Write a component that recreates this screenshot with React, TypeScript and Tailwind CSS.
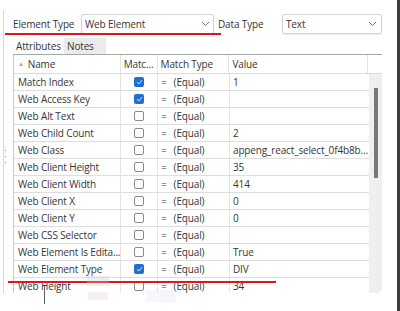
import React from "react";

const rows: { name: string; checked: boolean; value: string }[] = [
  { name: "Match Index", checked: true, value: "1" },
  { name: "Web Access Key", checked: true, value: "" },
  { name: "Web Alt Text", checked: false, value: "" },
  { name: "Web Child Count", checked: false, value: "2" },
  { name: "Web Class", checked: false, value: "appeng_react_select_0f4b8b..." },
  { name: "Web Client Height", checked: false, value: "35" },
  { name: "Web Client Width", checked: false, value: "414" },
  { name: "Web Client X", checked: false, value: "0" },
  { name: "Web Client Y", checked: false, value: "0" },
  { name: "Web CSS Selector", checked: false, value: "" },
  { name: "Web Element Is Edita...", checked: false, value: "True" },
  { name: "Web Element Type", checked: true, value: "DIV" },
  { name: "Web Height", checked: false, value: "34" },
];

function Chevron() {
  return (
    <svg width="9" height="6" viewBox="0 0 9 6" className="shrink-0">
      <path d="M1 1 L4.5 4.5 L8 1" fill="none" stroke="#777" strokeWidth="1" />
    </svg>
  );
}

function Checkbox({ checked }: { checked: boolean }) {
  if (checked) {
    return (
      <div className="w-[10px] h-[10px] rounded-[2px] bg-[#1f6fd1] flex items-center justify-center">
        <svg width="7" height="6" viewBox="0 0 7 6">
          <path d="M1 3.2 L2.8 5 L6 1.2" fill="none" stroke="#dfe9f7" strokeWidth="1" />
        </svg>
      </div>
    );
  }
  return <div className="w-[10px] h-[10px] rounded-[2px] border border-[#8a8a8a] bg-white" />;
}

export default function App() {
  return (
    <div
      className="relative w-[400px] h-[311px] bg-white overflow-hidden border-r-[3px] border-[#3c3c3c] text-[#363636] text-[10px] tracking-[-0.15px]"
      style={{ fontFamily: '"Open Sans", "Noto Sans", sans-serif' }}
    >
      <div className="ml-[3px] mt-[10px] h-[283px] border-l border-[#d6d6d6] pl-[9px] pr-[15px] flex flex-col">
        {/* Top row */}
        <div className="flex items-center h-[20px] mt-[4px]">
          <div className="w-[68px]">Element Type</div>
          <div className="w-[133px] h-[20px] border border-[#d4d4d4] rounded-[2px] flex items-center justify-between pl-[3px] pr-[3px] shadow-[0_1px_1px_rgba(0,0,0,0.08)]">
            <span>Web Element</span>
            <Chevron />
          </div>
          <div className="w-[68px] pl-[4px]">Data Type</div>
          <div className="w-[100px] h-[20px] border border-[#d4d4d4] rounded-[2px] flex items-center justify-between pl-[3px] pr-[4px] shadow-[0_1px_1px_rgba(0,0,0,0.08)]">
            <span>Text</span>
            <Chevron />
          </div>
        </div>
        {/* Tabs */}
        <div className="flex items-end h-[17px] mt-[3px]">
          <div className="h-[16px] w-[51px] pl-[3px] flex items-center bg-white">Attributes</div>
          <div className="h-[16px] w-[42px] pl-[3px] flex items-center bg-[#ebebeb]">Notes</div>
        </div>
        {/* Table */}
        <div className="flex-1 flex flex-col border-t border-l border-[#c8c8c8] border-t-[#a8a8a8] overflow-hidden">
          <div className="flex h-[19px] shrink-0 border-b border-[#dcdcdc]">
            <div className="w-[107px] flex items-center pl-[4px] border-r border-[#e3e3e3]">
              <span className="text-[6px] text-[#aaa] mr-[4px]">▲</span>
              <span>Name</span>
            </div>
            <div className="w-[37px] flex items-center pl-[3px] border-r border-[#e3e3e3]">Matc...</div>
            <div className="w-[72px] flex items-center pl-[3px] border-r border-[#e3e3e3]">Match Type</div>
            <div className="w-[139px] flex items-center pl-[3px] border-r border-[#e3e3e3]">Value</div>
            <div className="w-[14px]" />
          </div>
          <div className="flex flex-1 overflow-hidden">
            <div className="flex flex-col w-[355px]">
              {rows.map((r) => (
                <div key={r.name} className="flex h-[17px] shrink-0 border-b border-[#dedede]">
                  <div className="w-[107px] flex items-center pl-[4px] border-r border-[#e3e3e3] whitespace-nowrap overflow-hidden">
                    {r.name}
                  </div>
                  <div className="w-[37px] flex items-center justify-center border-r border-[#e3e3e3]">
                    <Checkbox checked={r.checked} />
                  </div>
                  <div className="w-[72px] flex items-center pl-[3px] border-r border-[#e3e3e3] whitespace-nowrap">
                    <span className="mr-[7px]">=</span>
                    <span>(Equal)</span>
                  </div>
                  <div className="w-[139px] flex items-center pl-[3px] whitespace-nowrap overflow-hidden">
                    {r.value}
                  </div>
                </div>
              ))}
            </div>
            <div className="w-[14px] bg-[#efefef] rounded-br-[6px] flex justify-center pt-[14px]">
              <div className="w-[4px] h-[90px] bg-[#777]" />
            </div>
          </div>
        </div>
      </div>

      {/* splitter grip dots */}
      <div className="absolute left-[5px] top-[150px] w-[1px] h-[1px] bg-[#999]" />
      <div className="absolute left-[5px] top-[156px] w-[1px] h-[1px] bg-[#999]" />
      <div className="absolute left-[5px] top-[162px] w-[1px] h-[1px] bg-[#999]" />

      {/* annotation lines */}
      <div className="absolute left-[5px] top-[33px] w-[216px] h-[2px] bg-[#e0161c]" />
      <div className="absolute left-[8px] top-[281px] w-[268px] h-[2px] bg-[#e0161c]" />
      {/* cursor line and drag ghost */}
      <div className="absolute left-[44px] top-[286px] w-[1px] h-[18px] bg-[#5a6270]" />
      <div className="absolute left-[87px] top-[276px] w-[22px] h-[10px] bg-[#c9c9cf] opacity-30" />
      <div className="absolute left-[88px] top-[292px] w-[20px] h-[8px] bg-[#e2c9c9] opacity-30" />
      <div className="absolute left-[146px] top-[290px] w-[30px] h-[12px] bg-[#dfe3ee] opacity-30" />
    </div>
  );
}
